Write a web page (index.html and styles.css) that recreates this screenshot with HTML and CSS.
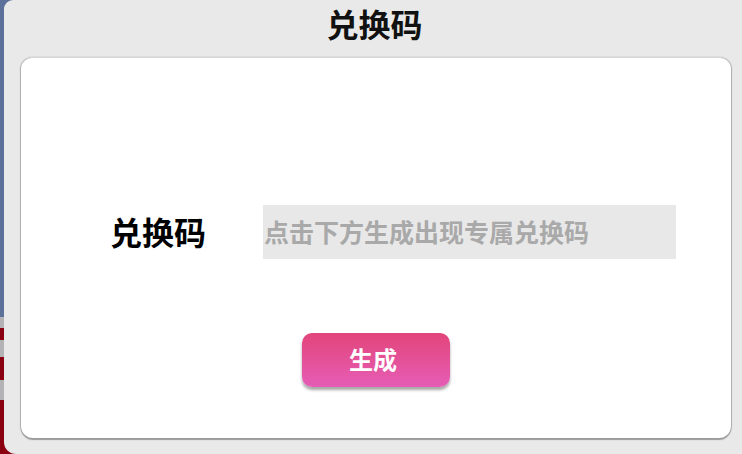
FILE: index.html
```html
<!DOCTYPE html>
<html lang="zh-CN">
<head>
    <meta charset="UTF-8">
    <meta name="viewport" content="width=device-width, initial-scale=1.0">
    <title>兑换码</title>
    <link rel="stylesheet" href="styles.css">
</head>
<body>
    <div class="panel">
        <h1 class="title">兑换码</h1>
        <div class="card">
            <div class="code-row">
                <span class="code-label">兑换码</span>
                <div class="code-box">点击下方生成出现专属兑换码</div>
            </div>
            <button class="generate">生成</button>
        </div>
    </div>
</body>
</html>
```

FILE: styles.css
```css
/* General */
body {
    margin: 0;
    height: 454px;
    overflow: hidden;
    display: flex;
    font-family: "Noto Sans CJK SC", "Noto Sans", sans-serif;
    background: linear-gradient(to bottom,
        #5b7199 0, #5b7199 317px,
        #b3b3b5 317px, #b3b3b5 328px,
        #8a0010 328px, #8a0010 340px,
        #b3b3b5 340px, #b3b3b5 357px,
        #8a0010 357px, #8a0010 380px,
        #b3b3b5 380px, #b3b3b5 400px,
        #8a0010 400px, #8a0010 454px);
}

/* Dialog panel */
.panel {
    flex: 1;
    margin-left: 4px;
    background-color: #e9e9e9;
    border-radius: 9px 0 0 12px;
    display: flex;
    flex-direction: column;
}

.title {
    margin: 0;
    height: 57px;
    line-height: 46px;
    text-align: center;
    font-size: 32px;
    font-weight: bold;
    color: #111;
    padding-left: 3px;
}

/* White card */
.card {
    margin: 0 11px 16px 17px;
    height: 381px;
    box-sizing: border-box;
    background-color: #fff;
    border-radius: 12px;
    border-top: 1px solid #d6d6d6;
    box-shadow: 0 2px 1px #9a9a9a, 1px 0 1px #b0b0b0, -1px 0 1px #b0b0b0;
    padding-top: 147px;
    display: flex;
    flex-direction: column;
    align-items: center;
}

.code-row {
    align-self: stretch;
    display: flex;
    align-items: center;
    padding-left: 89px;
    height: 54px;
}

.code-label {
    width: 153px;
    font-size: 32px;
    font-weight: bold;
    color: #000;
    padding-bottom: 2px;
}

.code-box {
    width: 413px;
    height: 54px;
    line-height: 52px;
    background-color: #e8e8e8;
    color: #a9a9a9;
    font-size: 25px;
    font-weight: bold;
    padding-left: 1px;
    box-sizing: border-box;
    white-space: nowrap;
}

/* Button */
.generate {
    margin-top: 74px;
    width: 148px;
    height: 54px;
    border: none;
    border-radius: 10px;
    background: linear-gradient(to bottom, #e2457a, #e65db6);
    color: #fff;
    font-family: inherit;
    font-size: 24px;
    font-weight: bold;
    padding: 0 6px 4px 0;
    box-shadow: 0 3px 3px rgba(0, 0, 0, 0.35);
    cursor: pointer;
}
```
